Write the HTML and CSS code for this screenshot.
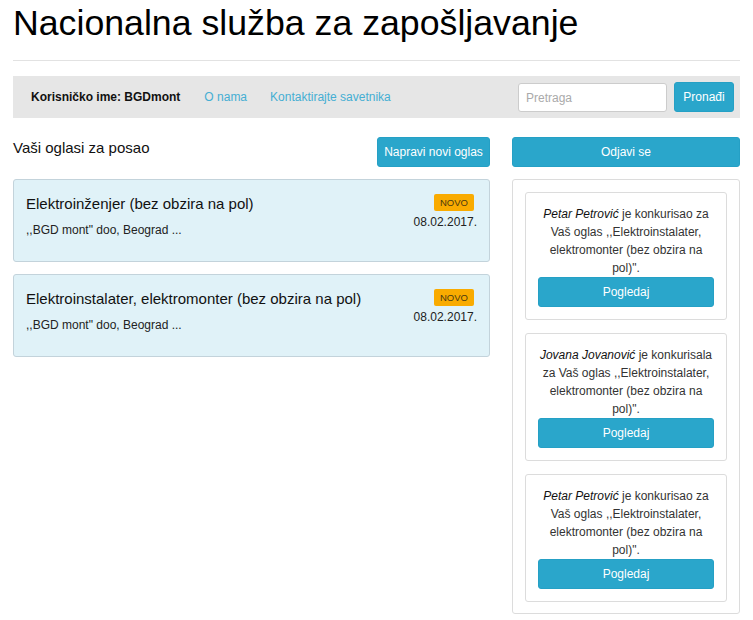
FILE: index.html
```html
<!DOCTYPE html>
<html lang="sr">
<head>
<meta charset="utf-8">
<title>Nacionalna služba za zapošljavanje</title>
<link rel="stylesheet" href="styles.css">
</head>
<body>
<div class="container">
  <h1 class="title">Nacionalna služba za zapošljavanje</h1>
  <hr class="rule">
  <nav class="navbar">
    <span class="user">Korisničko ime: BGDmont</span>
    <a class="nav-link" href="#">O nama</a>
    <a class="nav-link" href="#">Kontaktirajte savetnika</a>
    <form class="search">
      <input class="search-input" type="text" placeholder="Pretraga">
      <button class="btn btn-search" type="button">Pronađi</button>
    </form>
  </nav>
  <div class="main">
    <section class="left">
      <div class="left-head">
        <h2 class="section-title">Vaši oglasi za posao</h2>
        <button class="btn btn-new" type="button">Napravi novi oglas</button>
      </div>
      <div class="job">
        <div class="job-info">
          <div class="job-title">Elektroinženjer (bez obzira na pol)</div>
          <div class="job-company">,,BGD mont" doo, Beograd ...</div>
        </div>
        <div class="job-meta">
          <span class="badge">NOVO</span>
          <span class="job-date">08.02.2017.</span>
        </div>
      </div>
      <div class="job">
        <div class="job-info">
          <div class="job-title">Elektroinstalater, elektromonter (bez obzira na pol)</div>
          <div class="job-company">,,BGD mont" doo, Beograd ...</div>
        </div>
        <div class="job-meta">
          <span class="badge">NOVO</span>
          <span class="job-date">08.02.2017.</span>
        </div>
      </div>
    </section>
    <aside class="right">
      <button class="btn btn-logout" type="button">Odjavi se</button>
      <div class="panel">
        <div class="notice">
          <p class="notice-text"><em>Petar Petrović</em> je konkurisao za Vaš oglas ,,Elektroinstalater, elektromonter (bez obzira na pol)".</p>
          <button class="btn btn-view" type="button">Pogledaj</button>
        </div>
        <div class="notice">
          <p class="notice-text"><em>Jovana Jovanović</em> je konkurisala za Vaš oglas ,,Elektroinstalater, elektromonter (bez obzira na pol)".</p>
          <button class="btn btn-view" type="button">Pogledaj</button>
        </div>
        <div class="notice">
          <p class="notice-text"><em>Petar Petrović</em> je konkurisao za Vaš oglas ,,Elektroinstalater, elektromonter (bez obzira na pol)".</p>
          <button class="btn btn-view" type="button">Pogledaj</button>
        </div>
      </div>
    </aside>
  </div>
</div>
</body>
</html>
```

FILE: styles.css
```css
* { box-sizing: border-box; }
html, body { margin: 0; padding: 0; background: #fff; }
body {
  font-family: "Liberation Sans", Arial, sans-serif;
  font-size: 12px;
  color: #333;
}
.container {
  width: 753px;
  padding: 0 13px;
}
.title {
  margin: 0;
  padding-top: 4px;
  font-size: 35.7px;
  font-weight: 400;
  line-height: 38px;
  color: #000;
}
.rule {
  margin: 18px 0 15px;
  border: 0;
  border-top: 1px solid #e2e2e2;
  height: 0;
}
.navbar {
  display: flex;
  align-items: center;
  height: 42px;
  background: #e6e6e6;
  padding: 0 6px 0 18px;
}
.user {
  font-weight: 700;
  color: #111;
  margin-right: 24px;
}
.nav-link {
  color: #45aed3;
  text-decoration: none;
  margin-right: 23px;
}
.search {
  margin: 0 0 0 auto;
  display: flex;
  align-items: center;
  gap: 7px;
}
.search-input {
  width: 149px;
  height: 29px;
  border: 1px solid #ccc;
  border-radius: 3px;
  padding: 0 7px;
  font-family: inherit;
  font-size: 12px;
  color: #333;
  background: #fff;
  margin-top: 1px;
}
.search-input::placeholder { color: #aaa; }
.btn {
  font-family: inherit;
  font-size: 12px;
  color: #fff;
  background: #2aa6cb;
  border: 1px solid #25a0c5;
  border-radius: 3px;
  height: 30px;
  padding: 0 10px;
  cursor: pointer;
}
.btn-search { width: 60px; padding: 0; }
.main {
  display: grid;
  grid-template-columns: 477px 228px;
  gap: 22px;
  margin-top: 19px;
}
.left-head {
  display: flex;
  justify-content: space-between;
  align-items: flex-start;
  margin-bottom: 12px;
}
.section-title {
  margin: 0;
  font-size: 15px;
  font-weight: 400;
  line-height: 20px;
  padding-top: 1px;
  color: #111;
}
.btn-new { width: 113px; padding: 0; }
.job {
  display: flex;
  justify-content: space-between;
  align-items: flex-start;
  height: 83px;
  background: #e0f2f8;
  border: 1px solid #c3d3db;
  border-radius: 3px;
  padding: 14px 12px 0 12px;
  margin-bottom: 12px;
}
.job-title {
  font-size: 15px;
  line-height: 20px;
  color: #111;
}
.job-company {
  margin-top: 8px;
  font-size: 12px;
  line-height: 16px;
  color: #222;
}
.job-meta {
  display: flex;
  flex-direction: column;
  align-items: flex-end;
  padding-top: 0;
}
.badge {
  display: block;
  width: 40px;
  height: 17px;
  line-height: 17px;
  text-align: center;
  background: #f9ab00;
  color: #4a3a10;
  font-size: 9.5px;
  border-radius: 2px;
  margin-right: 3px;
}
.job-date {
  margin-top: 2px;
  font-size: 12px;
  line-height: 18px;
  color: #222;
}
.right {
  display: flex;
  flex-direction: column;
}
.btn-logout { width: 100%; }
.panel {
  margin-top: 12px;
  border: 1px solid #dcdcdc;
  border-radius: 3px;
  padding: 12px 12px 11px;
  display: flex;
  flex-direction: column;
  gap: 13px;
}
.notice {
  border: 1px solid #dcdcdc;
  border-radius: 3px;
  padding: 12px 12px 12px;
  text-align: center;
}
.notice-text {
  margin: 0;
  font-size: 12px;
  line-height: 18px;
  color: #333;
}
.notice-text em { color: #111; }
.btn-view { width: 100%; display: block; }
```
